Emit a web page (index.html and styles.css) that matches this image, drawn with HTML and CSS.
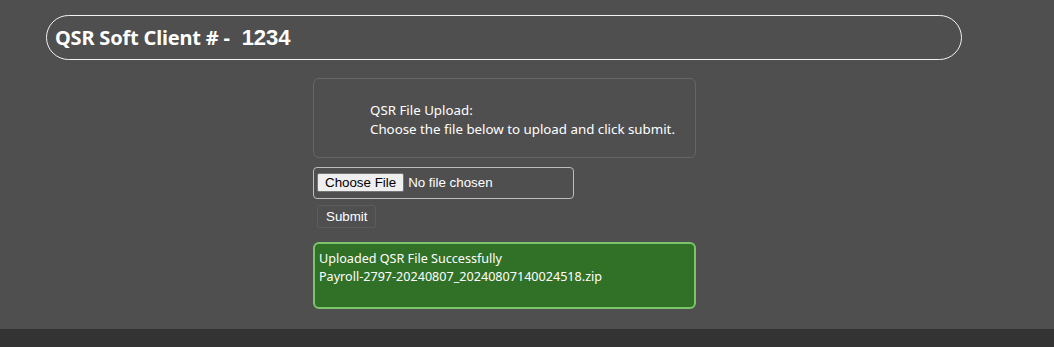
FILE: index.html
```html
<!DOCTYPE html>
<html lang="en">
<head>
  <meta charset="UTF-8" />
  <title>QSR Soft Client</title>
  <link rel="stylesheet" href="styles.css">
</head>
<body>
  <div class="page">
    <!-- Header -->
    <div class="header">
      <span class="title">QSR Soft Client # -</span>
      <span class="client-id">1234</span>
    </div>

    <!-- Upload -->
    <div class="upload">
      <div class="info">
        QSR File Upload:<br>
        Choose the file below to upload and click submit.
      </div>
      <form class="upload-form">
        <div class="file-box">
          <span class="file-btn">Choose File</span>
          <span class="file-name">No file chosen</span>
        </div>
        <button type="button" class="submit">Submit</button>
      </form>
      <div class="success">
        Uploaded QSR File Successfully<br>
        Payroll-2797-20240807_20240807140024518.zip
      </div>
    </div>
  </div>
</body>
</html>
```

FILE: styles.css
```css
html {
  background: #333333;
}

body {
  margin: 0;
  font-family: 'Noto Sans', sans-serif;
  color: #fff;
}

.page {
  background: #4f4f4f;
  height: 329px;
  padding: 15px 0 0 46px;
  box-sizing: border-box;
}

.header {
  width: 916px;
  height: 45px;
  box-sizing: border-box;
  border: 1px solid #f2f2f2;
  border-radius: 23px;
  display: flex;
  align-items: center;
  padding-left: 8px;
}

.title {
  font-size: 20px;
  font-weight: 700;
  letter-spacing: -0.2px;
}

.client-id {
  font-family: 'Liberation Sans', Arial, sans-serif;
  font-size: 22px;
  font-weight: 700;
  margin-left: 12px;
}

.upload {
  width: 383px;
  margin: 18px 0 0 267px;
}

.info {
  height: 80px;
  box-sizing: border-box;
  border: 1px solid #666;
  border-radius: 6px;
  padding: 22px 0 0 56px;
  font-size: 13.3px;
  line-height: 19px;
}

.upload-form {
  margin-top: 9px;
}

.file-box {
  width: 261px;
  height: 32px;
  box-sizing: border-box;
  border: 1px solid #bdbdbd;
  border-radius: 4px;
  display: flex;
  align-items: center;
  padding: 0 0 2px 3px;
  font-family: 'Liberation Sans', Arial, sans-serif;
  font-size: 13.33px;
}

.file-btn {
  background: #efefef;
  color: #000;
  border: 1px solid #767676;
  border-radius: 2px;
  padding: 1px 7px;
  margin-right: 4px;
}

.submit {
  display: block;
  margin: 6px 0 0 4px;
  background: transparent;
  color: #fff;
  border: 1px solid #5c5c5c;
  border-radius: 2px;
  font-family: 'Liberation Sans', Arial, sans-serif;
  font-size: 13.33px;
  padding: 2px 8px;
  height: 23px;
}

.success {
  margin-top: 14px;
  height: 67px;
  box-sizing: border-box;
  background: #317127;
  border: 2px solid #7cc46c;
  border-radius: 6px;
  padding: 6px 4px;
  font-size: 12.6px;
  line-height: 18px;
}
```
